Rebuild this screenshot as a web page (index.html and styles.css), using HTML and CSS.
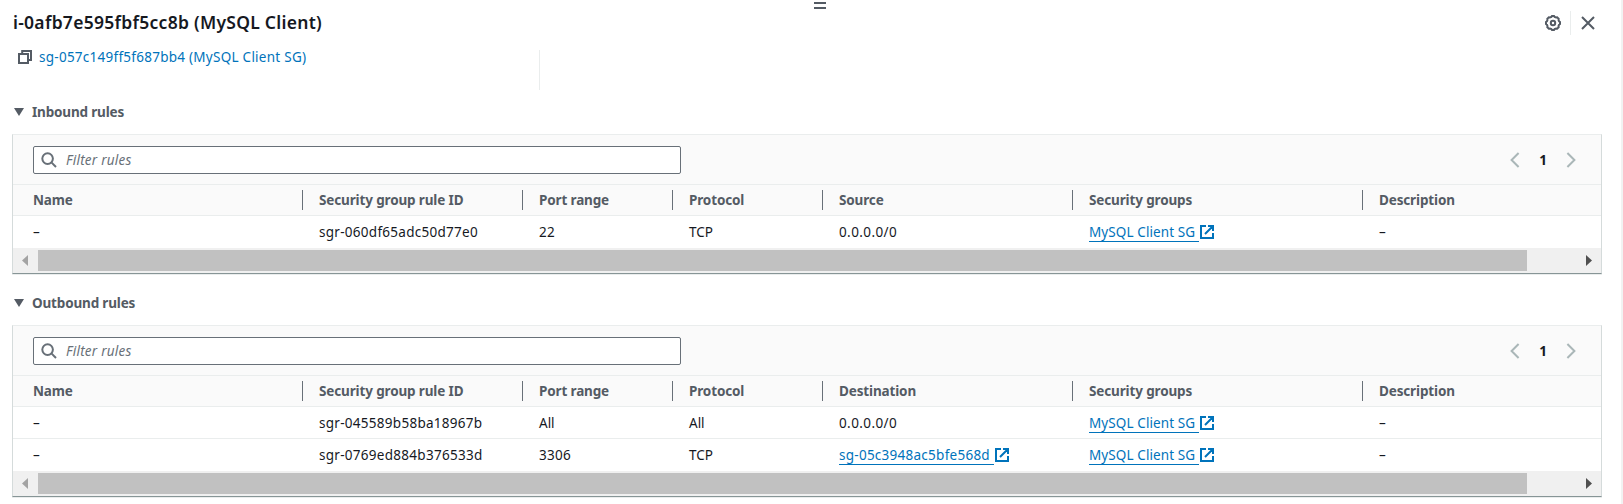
FILE: index.html
```html
<!DOCTYPE html>
<html lang="en">
<head>
<meta charset="utf-8">
<title>Instance security</title>
<link rel="stylesheet" href="styles.css">
</head>
<body>
<svg class="defs" width="0" height="0">
  <symbol id="search" viewBox="0 0 16 16"><circle cx="6.6" cy="6.6" r="5.3"/><path d="M10.4 10.4 15 15"/></symbol>
  <symbol id="ext" viewBox="0 0 14 14"><path d="M6 1H1v12h12V8M8 1h5v5M12.5 1.5 5 9"/></symbol>
  <symbol id="prev" viewBox="0 0 10 16"><path d="M8.6 1 1.6 8l7 7"/></symbol>
  <symbol id="next" viewBox="0 0 10 16"><path d="m1.400 1 7 7-7 7"/></symbol>
</svg>
<main class="panel">
  <div class="handle"></div>
  <header class="top">
    <h1 class="title">i-0afb7e595fbf5cc8b (MySQL Client)</h1>
    <div class="actions">
      <svg class="gear" width="16" height="16" viewBox="0 0 16 16"><path d="M6.400 1.900 7 1h2l.6.9 1.500.6 1.100-.2 1.500 1.500-.2 1.100.6 1.500.9.6v2l-.9.6-.6 1.500.2 1.100-1.500 1.500-1.100-.2-1.500.6L9 15H7l-.6-.9-1.500-.6-1.100.2-1.500-1.500.2-1.100-.6-1.500L1 9V7l.9-.6.6-1.500-.2-1.100 1.500-1.500 1.100.2z"/><circle cx="8" cy="8" r="2.2"/></svg>
      <span class="divider"></span>
      <svg class="close" width="14" height="14" viewBox="0 0 14 14"><path d="m1 1 12 12M13 1 1 13"/></svg>
    </div>
  </header>
  <div class="groups">
    <div class="group">
      <svg class="copy" width="14" height="14" viewBox="0 0 14 14"><path d="M1 4h9v9H1zM4.200 4V1H13v9h-3"/></svg>
      <a class="group-link">sg-057c149ff5f687bb4 (MySQL Client SG)</a>
    </div>
  </div>

  <h2 class="section"><span class="caret"></span>Inbound rules</h2>
  <section class="card">
    <div class="tools">
      <div class="search"><svg width="16" height="16"><use href="#search"/></svg><span>Filter rules</span></div>
      <div class="pager"><svg width="10" height="16"><use href="#prev"/></svg><b>1</b><svg width="10" height="16"><use href="#next"/></svg></div>
    </div>
    <div class="row head"><span>Name</span><span>Security group rule ID</span><span>Port range</span><span>Protocol</span><span>Source</span><span>Security groups</span><span>Description</span></div>
    <div class="row"><span>–</span><span class="id">sgr-060df65adc50d77e0</span><span class="id">22</span><span>TCP</span><span class="cidr">0.0.0.0/0</span><span><a class="link"><u>MySQL Client SG</u><svg width="14" height="14"><use href="#ext"/></svg></a></span><span>–</span></div>
    <div class="scroll"><i class="left"></i><div class="thumb"></div><i class="right"></i></div>
  </section>

  <h2 class="section second"><span class="caret"></span>Outbound rules</h2>
  <section class="card">
    <div class="tools">
      <div class="search"><svg width="16" height="16"><use href="#search"/></svg><span>Filter rules</span></div>
      <div class="pager"><svg width="10" height="16"><use href="#prev"/></svg><b>1</b><svg width="10" height="16"><use href="#next"/></svg></div>
    </div>
    <div class="row head"><span>Name</span><span>Security group rule ID</span><span>Port range</span><span>Protocol</span><span>Destination</span><span>Security groups</span><span>Description</span></div>
    <div class="row upper"><span>–</span><span class="id">sgr-045589b58ba18967b</span><span>All</span><span>All</span><span class="cidr">0.0.0.0/0</span><span><a class="link"><u>MySQL Client SG</u><svg width="14" height="14"><use href="#ext"/></svg></a></span><span>–</span></div>
    <div class="row lined"><span>–</span><span class="id">sgr-0769ed884b376533d</span><span class="id">3306</span><span>TCP</span><span><a class="link sg"><u>sg-05c3948ac5bfe568d</u><svg width="14" height="14"><use href="#ext"/></svg></a></span><span><a class="link"><u>MySQL Client SG</u><svg width="14" height="14"><use href="#ext"/></svg></a></span><span>–</span></div>
    <div class="scroll"><i class="left"></i><div class="thumb"></div><i class="right"></i></div>
  </section>
</main>
</body>
</html>
```
FILE: styles.css
```css
* { box-sizing: border-box; }
body {
  margin: 0;
  height: 504px;
  overflow: hidden;
  background: #fff;
  color: #16191f;
  font: 13.5px/20px "Noto Sans", "Open Sans", sans-serif;
  white-space: nowrap;
}
svg { display: block; flex: none; fill: none; stroke: #545b64; stroke-width: 2; }
.defs { position: absolute; }
.panel {
  height: 504px;
  padding: 2px 20px 0 12px;
  border-right: 2px solid #f2f2f2;
}
.handle {
  width: 12px;
  height: 7px;
  margin-left: 802px;
  border: solid #545b64;
  border-width: 2px 0;
}
.top { display: flex; justify-content: space-between; height: 28px; padding-top: 2px; }
.title { margin: 0 0 0 1px; font-size: 17.5px; line-height: 22px; font-weight: 600; letter-spacing: 0.27px; }
.actions { display: flex; align-items: center; height: 24px; margin-right: 6px; }
.gear { stroke-width: 2; }
.divider { width: 1px; height: 24px; margin: 0 10px 0 9px; background: #eaeded; }
.groups { display: flex; width: 528px; height: 40px; margin-top: 13px; border-right: 1px solid #eaeded; }
.group { display: flex; height: 14px; align-items: center; padding-left: 6px; gap: 7px; }
.group-link { color: #0073bb; letter-spacing: 0.26px; }
.section {
  display: flex;
  align-items: center;
  height: 20px;
  margin: 12px 0 12px 2px;
  color: #545b64;
  font-size: 13.5px;
  font-weight: 700;
  letter-spacing: -0.17px;
}
.section.second { margin-top: 19px; }
.caret { width: 10px; height: 8px; margin-right: 8px; background: #545b64; clip-path: polygon(0 0, 100% 0, 50% 100%); }
.card {
  width: 1590px;
  border: 1px solid #d5dbdb;
  border-top-color: #eaeded;
  border-bottom-color: #879596;
  box-shadow: 0 1px 0 #eaeded;
}
.tools { display: flex; justify-content: space-between; height: 49px; padding: 11px 25px 10px 20px; background: #fafafa; }
.search {
  display: flex;
  align-items: center;
  width: 648px;
  height: 28px;
  padding-left: 7px;
  gap: 9px;
  border: 1px solid #687078;
  border-radius: 2px;
  background: #fff;
  color: #687078;
  font-style: italic;
  letter-spacing: 0.24px;
}
.search svg { stroke: #687078; }
.pager { display: flex; align-items: center; justify-content: space-between; width: 66px; height: 28px; }
.pager svg { stroke: #aab7b8; }
.row {
  display: grid;
  grid-template-columns: 290px 220px 150px 150px 250px 290px 1fr;
  height: 32px;
  padding-top: 6px;
}
.row > span { height: 20px; padding-left: 16px; border-right: 1px solid transparent; }
.row > span:first-child { padding-left: 20px; }
.row > .id, .sg { letter-spacing: 0.28px; }
.row > .cidr { letter-spacing: 0.4px; }
.head {
  height: 32px;
  padding-top: 5px;
  background: #fafafa;
  border: solid #eaeded;
  border-width: 1px 0;
  color: #545b64;
  font-weight: 700;
  letter-spacing: -0.14px;
}
.head > span:not(:last-child) { border-right-color: #687078; }
.upper { height: 31px; }
.lined { height: 33px; border-top: 1px solid #eaeded; }
.link { display: flex; color: #0073bb; letter-spacing: 0.1px; }
.link.sg { letter-spacing: 0.26px; }
.link u { height: 20px; padding-right: 4px; border-bottom: 1px solid #0073bb; text-decoration: none; }
.link svg { margin: 3px 0 0 1px; stroke: #0073bb; }
.scroll { display: flex; align-items: center; height: 25px; background: #f0f0f0; }
.thumb { width: 1489px; height: 21px; margin: 0 59px 0 10px; background: #c1c1c1; }
.left, .right { width: 6px; height: 11px; }
.left { margin-left: 9px; background: #a3a3a3; clip-path: polygon(100% 0, 100% 100%, 0 50%); }
.right { background: #505050; clip-path: polygon(0 0, 100% 50%, 0 100%); }
```
